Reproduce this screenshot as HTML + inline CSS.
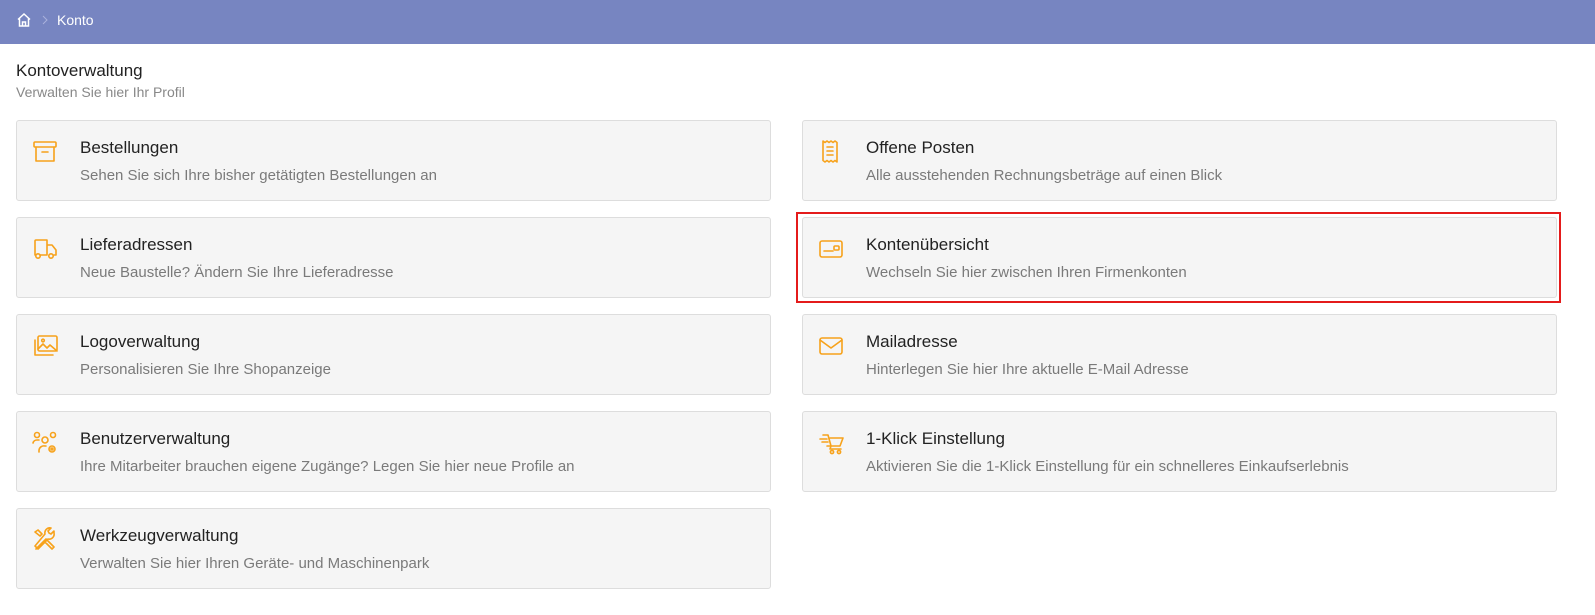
<!DOCTYPE html>
<html><head><meta charset="utf-8"><style>
*{box-sizing:border-box;margin:0;padding:0}
body{width:1595px;height:615px;background:#fff;font-family:"Liberation Sans",sans-serif;position:relative;overflow:hidden}
.hdr{position:absolute;left:0;top:0;width:1595px;height:44px;background:#7785c1;color:#fff}
.hdr .t{position:absolute;left:57px;top:12px;font-size:14px}
.h1{position:absolute;left:16px;top:61px;font-size:17px;color:#222}
.h2{position:absolute;left:16px;top:84px;font-size:14px;color:#888}
.card{position:absolute;width:755px;height:81px;background:#f5f5f5;border:1px solid #ddd;border-radius:3px}
.card .ti{position:absolute;left:63px;top:17px;font-size:17px;color:#222}
.card .de{position:absolute;left:63px;top:46px;font-size:15px;color:#7a7a7a}
.card svg{position:absolute;left:15px;top:18px;width:26px;height:26px;fill:none;stroke:#f7a21b;stroke-width:1.6;stroke-linecap:round;stroke-linejoin:round}
.red{position:absolute;left:796px;top:212px;width:765px;height:91px;border:2px solid #e41b1b}
</style></head><body>
<div class="hdr">
<svg style="position:absolute;left:16px;top:12px" width="16" height="16" viewBox="0 0 16 16" fill="none" stroke="#fff" stroke-width="1.5"><path d="M2 7.5L8 2l6 5.5M3.5 6.5V14h9V6.5M6.5 14v-4h3v4"/></svg>
<svg style="position:absolute;left:41px;top:15px" width="8" height="10" viewBox="0 0 8 10" fill="none" stroke="#aab2dc" stroke-width="1"><path d="M2 1l4 4-4 4"/></svg>
<div class="t">Konto</div></div>
<div class="h1">Kontoverwaltung</div>
<div class="h2">Verwalten Sie hier Ihr Profil</div>

<div class="card" style="left:16px;top:120px"><svg viewBox="0 0 26 26"><rect x="2" y="3" width="22" height="5" rx="1"/><path d="M4 8v14h18V8M10 13h6"/></svg><div class="ti">Bestellungen</div><div class="de">Sehen Sie sich Ihre bisher getätigten Bestellungen an</div></div>
<div class="card" style="left:16px;top:217px"><svg viewBox="0 0 26 26"><path d="M3 19V5a1 1 0 011-1h11v15M15 9h5l4 5v5h-2M8 19h7"/><circle cx="6" cy="20" r="2.2"/><circle cx="19" cy="20" r="2.2"/></svg><div class="ti">Lieferadressen</div><div class="de">Neue Baustelle? Ändern Sie Ihre Lieferadresse</div></div>
<div class="card" style="left:16px;top:314px"><svg viewBox="0 0 26 26"><rect x="6" y="3" width="19" height="15" rx="1.5"/><path d="M3 7v15h18M6 16l5-5 4 4 3-3 7 6"/><circle cx="11" cy="7.5" r="1.3"/></svg><div class="ti">Logoverwaltung</div><div class="de">Personalisieren Sie Ihre Shopanzeige</div></div>
<div class="card" style="left:16px;top:411px"><svg viewBox="0 0 26 26"><circle cx="5" cy="5" r="2.5"/><circle cx="21" cy="5" r="2.5"/><circle cx="13" cy="10" r="3"/><path d="M1 13a4 4 0 014-3h2M7 22v-2a5 5 0 016-4h1"/><circle cx="20" cy="19" r="3"/><circle cx="20" cy="19" r="1"/></svg><div class="ti">Benutzerverwaltung</div><div class="de">Ihre Mitarbeiter brauchen eigene Zugänge? Legen Sie hier neue Profile an</div></div>
<div class="card" style="left:16px;top:508px"><svg viewBox="0 0 26 26"><path d="M4 22l10-10M3 5l3-2 4 4-2 2zM14 12l8 8-2 2-8-8M22 4l-3 3-2-1-1-2 3-3a5 5 0 00-6 6L3 19l3 3 10-10a5 5 0 006-6z"/></svg><div class="ti">Werkzeugverwaltung</div><div class="de">Verwalten Sie hier Ihren Geräte- und Maschinenpark</div></div>

<div class="card" style="left:802px;top:120px"><svg viewBox="0 0 26 26"><path d="M5 2l2 1.5L9 2l2 1.5L13 2l2 1.5L17 2l2 1.5V23l-2-1.5-2 1.5-2-1.5-2 1.5-2-1.5L7 23l-2-1.5zM9 8h6M9 12h6M9 16h6"/></svg><div class="ti">Offene Posten</div><div class="de">Alle ausstehenden Rechnungsbeträge auf einen Blick</div></div>
<div class="card" style="left:802px;top:217px"><svg viewBox="0 0 26 26"><rect x="2" y="5" width="22" height="16" rx="2"/><path d="M6 15h9"/><rect x="16" y="10" width="5" height="4" rx="1"/></svg><div class="ti">Kontenübersicht</div><div class="de">Wechseln Sie hier zwischen Ihren Firmenkonten</div></div>
<div class="card" style="left:802px;top:314px"><svg viewBox="0 0 26 26"><rect x="2" y="5" width="22" height="16" rx="2"/><path d="M2 7l11 8 11-8"/></svg><div class="ti">Mailadresse</div><div class="de">Hinterlegen Sie hier Ihre aktuelle E-Mail Adresse</div></div>
<div class="card" style="left:802px;top:411px"><svg viewBox="0 0 26 26"><path d="M5 5h5l3 11h9l3-8H12M2 9h7M4 12h6M9 16h4M13 16l-1 3h11"/><circle cx="14" cy="22" r="1.6"/><circle cx="21" cy="22" r="1.6"/></svg><div class="ti">1-Klick Einstellung</div><div class="de">Aktivieren Sie die 1-Klick Einstellung für ein schnelleres Einkaufserlebnis</div></div>
<div class="red"></div>
</body></html>
